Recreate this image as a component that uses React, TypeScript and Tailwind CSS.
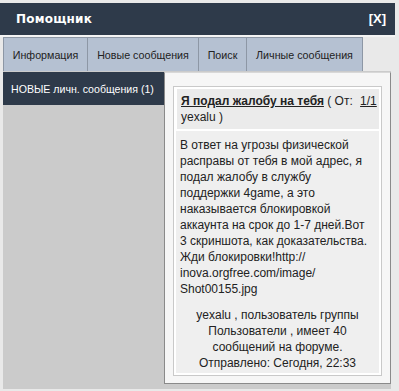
import React from "react";

export default function App() {
  const tabs = [
    { label: "Информация", w: "w-[85px]" },
    { label: "Новые сообщения", w: "w-[112px]" },
    { label: "Поиск", w: "w-[49px]" },
    { label: "Личные сообщения", w: "w-[117px]" },
  ];
  const body = [
    "В ответ на угрозы физической",
    "расправы от тебя в мой адрес, я",
    "подал жалобу в службу",
    "поддержки 4game, а это",
    "наказывается блокировкой",
    "аккаунта на срок до 1-7 дней.Вот",
    "3 скриншота, как доказательства.",
    "Жди блокировки!http://",
    "inova.orgfree.com/image/",
    "Shot00155.jpg",
  ];
  const footer = [
    "yexalu , пользователь группы",
    "Пользователи , имеет 40",
    "сообщений на форуме.",
    "Отправлено: Сегодня, 22:33",
  ];
  return (
    <div className="w-[399px] h-[391px] bg-[#e9e9e9] font-['Liberation_Sans',Arial,sans-serif] text-[12px] leading-[16px] text-[#222] overflow-hidden">
      <div className="h-[3px]" />
      <div className="w-[395px] h-[32px] bg-[#2e3a4a] flex items-center justify-between pl-[16px] pr-[9px] text-white font-bold">
        <span className="text-[12px] font-['DejaVu_Sans',sans-serif] tracking-[0.2px]">Помощник</span>
        <span className="text-[13px]">[X]</span>
      </div>
      <div className="w-[395px] h-[2px] bg-[#f4f4f4]" />
      <div className="flex pl-[3px] h-[34px]">
        {tabs.map((t) => (
          <div
            key={t.label}
            className={`${t.w} h-full bg-[#b5c1d2] border border-[#8d97a5] border-b-0 -mr-[1px] flex items-center justify-center text-[10.7px] text-[#222]`}
          >
            {t.label}
          </div>
        ))}
      </div>
      <div className="ml-[3px] w-[388px] h-[318px] bg-[#cbcbcb] flex pt-[1px]">
        <div className="w-[161px] shrink-0">
          <div className="h-[33px] bg-[#2e3a4a] text-white text-[10.6px] flex items-center pl-[8px] whitespace-nowrap">
            НОВЫЕ личн. сообщения (1)
          </div>
        </div>
        <div className="w-[227px] h-[312px] bg-[#f6f6f6] border border-[#8a8a8a] border-t-[#d8d8d8] px-[8px] pt-[13px]">
          <div className="border border-[#c9c9c9] bg-white p-[2px]">
            <div className="bg-[#ebebeb] px-[4px] py-[4px] ml-[1px] whitespace-nowrap">
              <div>
                <span className="font-bold underline text-[#222]">Я подал жалобу на тебя</span>
                <span> ( От: </span>
                <span className="underline ml-[4px]">1/1</span>
              </div>
              <div>yexalu )</div>
            </div>
            <div className="bg-[#efefef] mt-[2px] px-[4px] pt-[6px] pb-[2px] whitespace-nowrap">
              <div>
                {body.map((l) => (
                  <div key={l}>{l}</div>
                ))}
              </div>
              <div className="mt-[10px] text-center">
                {footer.map((l) => (
                  <div key={l}>{l}</div>
                ))}
              </div>
            </div>
          </div>
        </div>
      </div>
    </div>
  );
}
